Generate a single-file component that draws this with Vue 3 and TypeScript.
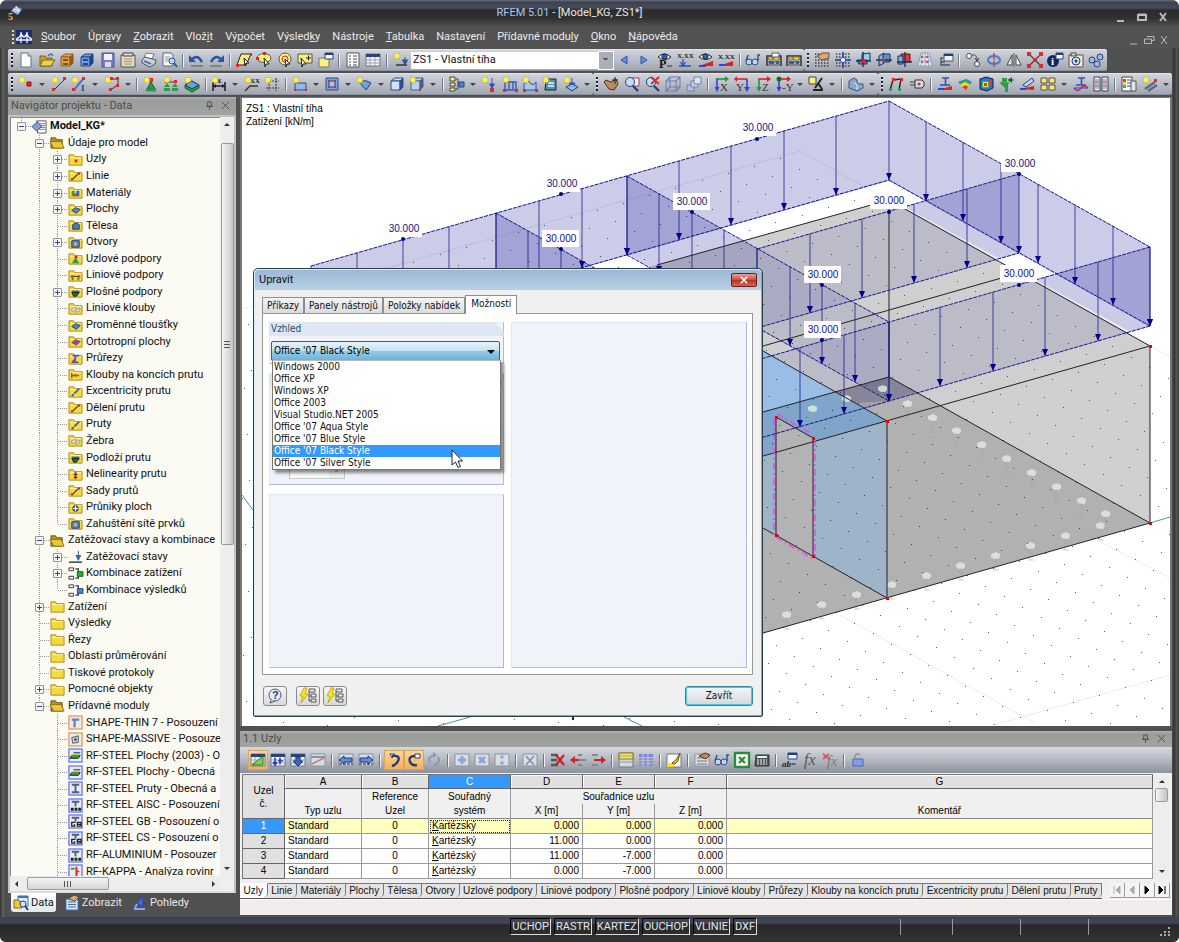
<script setup lang="ts">
import { ref } from 'vue'

type Item = string

const p = (d: string, fill = 'none', stroke = 'none', w = 1) =>
  `<path d="${d}" fill="${fill}" stroke="${stroke}" stroke-width="${w}"/>`
const dot = (x: number, y: number, r: number, fill: string, stroke = 'none') =>
  `<circle cx="${x}" cy="${y}" r="${r}" fill="${fill}" stroke="${stroke}"/>`
const label = (x: number, y: number, t: string, fill = '#333', size = 8, extra = 'font-weight="bold"') =>
  `<text x="${x}" y="${y}" font-size="${size}" fill="${fill}" font-family="Liberation Serif, serif" ${extra}>${t}</text>`

const star = p('M4 0V8M0 4H8M1 1L7 7M7 1L1 7', 'none', '#c9ae2a') + dot(4, 4, 2.5, '#fff04a')
const folder = p('M1 3H6L7 5H15V14H1Z', '#f5da3e', '#a98a1b') + p('M2 6H14', 'none', '#fff6a0')
const abacus = p('M1 14V4H15V14', 'none', '#333', 1.5) + p('M1 7H15M1 10H15M1 13H15', 'none', '#555') +
  p('M3 5H6V8H3ZM8 5H13V8H8Z', '#f7e16a', '#8a7a20') + p('M3 9H8V12H3ZM10 9H13V12H10Z', '#345fa8')
const grid = p('M1 2H16M1 5H16M1 8H16M1 11H16M1 14H16', 'none', '#444', 1.4).replace('/>', ' stroke-dasharray="1.500 1.500"/>')
const eye = p('M1 5Q7 -1 14 5Q8 10 1 5Z', '#fff', '#222') + dot(7.5, 4.5, 2.6, '#2f62b8', '#123')
const beam = p('M5 2H12M8.5 2V9M3 9H13', 'none', '#2b57a8', 1.6)
const card = p('M1 2H15V14H1Z', '#d9dde4', '#8d93a0')
const frameBox = (c: string) => p('M1 1H15V15H1Z', '#e9ebf2', c, 1.6)
const cube = (f: string, s: string) =>
  p('M2 5L6 2H14L11 5Z', f, s) + p('M2 5H11V14H2Z', f, s) + p('M11 5L14 2V11L11 14Z', s, s)
const supportNode = p('M8 6L12 13H4Z', '#2e9a48', '#1a5c2a') + p('M3 14H13', 'none', '#2e9a48', 3) + p('M6 2H10V6H6Z', '#e22')
const support2 = p('M2 6H14', 'none', '#333') + p('M4 7L7 11H1ZM12 7L15 11H9ZM1 12H7V15H1ZM9 12H15V15H9Z', '#2e9a48') + p('M2 4H5V7H2ZM11 4H14V7H11Z', '#e22')
const tableBase = p('M1 2H15V14H1Z', '#f4f6fa', '#6d7585') + p('M1 2H15V5H1Z', '#27457c') + p('M1 8H15M1 11H15M5 5V14M10 5V14', 'none', '#9aa3b3')
const arrows = (n: string, a: string, b: string) =>
  p('M3 3H13', 'none', a, 1.6) + p('M12 0L16 3L12 6Z', a) + p('M4 3V13', 'none', b, 1.6) + p('M1.500 11L4 16L6.500 11Z', b) + label(7, 15, n, '#333', 11, '')

const icons: Record<string, string> = {
  app: p('M3 6L8 1L14 4L10 10Z', '#a9bfe0', '#4a6797') + p('M8 1L11 7M5 4L12 6', 'none', '#e8f0ff') + label(0, 15, '5', '#f5c01c', 10),
  bridge: p('M0 1H16V15H0Z', '#1f2d6e') + p('M0 11H16M5 3V14M11 3V14M0 10Q5 8 5 4Q8 12 11 4Q11 8 16 10', 'none', '#f2f5ff', 1.3),
  new: p('M3 1H10L13 4V15H3Z', '#fff', '#6b7280') + p('M10 1V4H13', '#dde3ee', '#6b7280'),
  open: p('M1 4H6L7 6H13V14H1Z', '#c9a227', '#7c6418') + p('M4 8H16L12 14H1Z', '#f0cf55', '#7c6418') + p('M9 4Q12 0 14 4', 'none', '#3a6fc2', 1.4),
  boxo: cube('#e2a24a', '#8f5c1a') + p('M4 8H9M4 12H9', 'none', '#5c3a0c', 1.4),
  boxb: cube('#6f9de8', '#23448c') + p('M4 8H9M4 12H9', 'none', '#122c66', 1.4),
  save: p('M2 1H14V15H2Z', '#7b7fc9', '#4b4f94') + p('M4 2H12V8H4Z', '#f2f2fb') + p('M5 10H11V15H5Z', '#d8d9ea'),
  clip: p('M1 3H15V15H1Z', '#e8dcc0', '#555') + p('M3 1H13V4H3Z', '#ddd', '#444') + p('M4 7H12M4 9.500H12M4 12H12', 'none', '#a38f63'),
  print: p('M5 1L13 2L11 7L3 6Z', '#fff', '#777') + p('M1 8L4 5L15 8L14 12L9 15L1 11Z', '#cdd2da', '#555') + p('M3 9L10 12', 'none', '#46639c', 1.5),
  preview: p('M2 1H10L12 3V14H2Z', '#f4f6fa', '#666') + p('M4 5H9M4 7H9M4 9H8', 'none', '#999') + dot(11, 9, 3, '#b8d6f5', '#2d5b9e') + p('M13 11L16 15', 'none', '#2d5b9e', 2),
  undo: p('M3 8Q9 1 14 10', 'none', '#2c55a0', 2.6) + p('M1 3V10H8Z', '#2c55a0') + p('M3 14H15', 'none', '#555'),
  redo: p('M2 10Q7 1 13 8', 'none', '#2c55a0', 2.6) + p('M15 3V10H8Z', '#2c55a0') + p('M1 14H13', 'none', '#555'),
  para: p('M5 2H15L10 13H1Z', '#fdf07a', '#222') + p('M0 12H3V15H0ZM14 1H16V4H14Z', '#e22') + p('M8 6L13 11L10 11L9 14Z', '#fff', '#222'),
  ellp: `<ellipse cx="8" cy="6" rx="7" ry="4.500" fill="#fdf07a" stroke="#555"/>` + p('M0 5H3V8H0ZM7 0H10V3H7Z', '#e22') + p('M8 6L13 12L10 12L9 15Z', '#fff', '#222'),
  circ: dot(8, 7, 6, '#fdf07a', '#555') + dot(8, 7, 3, 'none', '#d22') + p('M8 7L13 12L10 12L9 15Z', '#fff', '#222'),
  yplus: p('M1 2H15V11H1Z', '#fdf07a', '#555') + p('M9 6H14M11.500 3.500V8.500', 'none', '#222') + p('M4 6L9 12L6 12L5 15Z', '#fff', '#222'),
  ynew: p('M1 6H11V15H1Z', '#fdf07a', '#777') + p('M7 1H15V7H7Z', '#fff', '#24407a') + p('M7 1H15V3H7Z', '#24407a'),
  list: p('M2 1H14V15H2Z', '#fff', '#555') + p('M4 4H6M8 4H12M4 7H6M8 7H12M4 10H6M8 10H12M4 13H6M8 13H12', 'none', '#444'),
  table: tableBase,
  sload: star + p('M3 13H14', 'none', '#333', 1.5) + p('M12 5V10M9.500 8L12 13L14.500 8Z', '#2c55a0', '#2c55a0'),
  left: p('M11 4V12L5 8Z', '#5d8be6', '#2f57b0'),
  right: p('M5 4V12L11 8Z', '#5d8be6', '#2f57b0'),
  eyep: eye + label(2, 16, 'P', '#111', 12) + p('M10 14H15', 'none', '#333'),
  xxd: label(0, 6, 'X.XX', '#222', 7) + p('M6 7V13M2 14H14M3.500 10L6 14L8.500 10', 'none', '#2b57a8', 1.3),
  eyer: eye + p('M1 14L15 9V14Z', '#d22') + p('M1 14H8', 'none', '#24f', 2),
  xxr: label(0, 7, 'X.XX', '#222', 7) + p('M1 14L15 9V14Z', '#d22') + p('M1 13H8', 'none', '#24f', 2),
  glasses: dot(4, 10, 3, '#c3d3ee', '#2b4b86') + dot(10, 10, 3, '#c3d3ee', '#2b4b86') + p('M1 9L3 3M13 9L13 3L15 3', 'none', '#2b4b86', 1.4),
  abac1: abacus + p('M6 1H13V5H6Z', '#fff', '#555'),
  abac: abacus,
  ghand: grid + p('M3 4L9 1L15 1L15 6L8 8Z', '#d9a87a', '#6d4a2a'),
  gcross: grid + p('M8 0V16M0 8H16', 'none', '#2340b8', 1.6) + dot(8, 8, 2.5, '#fff', '#2340b8'),
  gb1: p('M6 2L14 1V8L6 10Z', '#9cc7ef', '#234') + p('M1 8H11V12H3Z', '#4a86d0', '#234') + p('M7 0V15M0 9H15', 'none', '#14366b', 1.5) + p('M6 8H9V11H6Z', '#e22'),
  gb2: p('M3 4L8 1V11L3 14Z', '#8ab8ea', '#234') + p('M7 2H14V10H7Z', '#5a94d8', '#234') + p('M0 8H16', 'none', '#14366b', 1.5) + p('M6 7H9V10H6Z', '#e22'),
  gb3: p('M4 2H13V10H4Z', '#e33', '#611') + p('M1 4H6V12H1Z', '#7ab0e8', '#234') + p('M8 0V15M0 10H15', 'none', '#14366b', 1.4),
  gnet: p('M4 1H12L15 14H1Z', '#e9f1fb', '#8aa0c0') + p('M8 1V14M3 5H13M2 9H14M5.500 1L4 14M10.500 1L12 14', 'none', '#8aa0c0') + p('M4 4H6V6H4ZM9 4H11V6H9ZM9 9H11V11H9ZM4 9H6V11H4Z', '#e44'),
  gwin: p('M6 2H15V9H6Z', '#eef3fb', '#456') + p('M6 2H15V4H6Z', '#24407a') + p('M5 6H3V13H12M3 10H7', 'none', '#456', 1.3),
  copy: dot(4, 4, 2.5, '#fff', '#444') + dot(12, 12, 2.5, '#fff', '#444') + p('M7 3Q12 2 12 8', 'none', '#555') + p('M10 6L12 9L14 6', 'none', '#333'),
  rot: `<ellipse cx="8" cy="8" rx="6" ry="4" fill="none" stroke="#4f78c8" stroke-width="2"/>` + p('M8 1V15', 'none', '#d33', 1.4).replace('/>', ' stroke-dasharray="3 1"/>'),
  mirror: p('M6 3V13L1 13Z', '#eee', '#444') + p('M10 3V13L15 13Z', '#fff', '#444') + p('M8 1V15', 'none', '#555'),
  xcross: p('M2 2L14 14M14 2L2 14', 'none', '#444', 1.4) + p('M0 0H4V4H0ZM12 0H16V4H12ZM0 12H4V16H0ZM12 12H16V16H12ZM6 6H10V10H6Z', '#e02a2a'),
  info: dot(6, 9, 6, '#15276b') + label(4, 13, 'i', '#fff', 11) + p('M9 1H16V7H9Z', '#fff', '#24407a') + p('M9 1H16V3H9Z', '#24407a'),
  cam: p('M1 3H15V15H1Z', '#f3e6cf', '#555') + p('M3 1H8V4H3Z', '#ddd', '#444') + dot(8, 9, 4, '#cfe0f5', '#24407a') + dot(8, 9, 1.5, '#24407a'),
  dots3: dot(4, 8, 3, '#9db9e6', '#24407a') + dot(12, 5, 3, '#9db9e6', '#24407a') + dot(9, 12, 3, '#9db9e6', '#24407a'),
  node: star + p('M9 6H13V10H9Z', '#e02a2a', '#911'),
  line: star + p('M3 14L14 3', 'none', '#333') + p('M1 12H4V15H1ZM12 1H15V4H12Z', '#e02a2a'),
  linei: star + p('M3 14L12 3', 'none', '#4a78c8', 2) + label(10, 15, 'I', '#24407a', 9) + p('M1 12H4V15H1ZM11 1H14V4H11Z', '#e02a2a'),
  poly: star + p('M7 3H14V9L6 14', 'none', '#333') + p('M6 1H9V4H6ZM12 1H15V4H12ZM12 8H15V11H12ZM5 12H8V15H5Z', '#e02a2a'),
  sup1: supportNode + star,
  sup2: support2 + star,
  sup3: p('M1 9L8 5L15 9L8 13Z', '#5ba7ea', '#225') + p('M1 9V12L8 16L15 12V9L8 13Z', '#2e9a48', '#1a5c2a') + star,
  dim: p('M2 6V15M14 6V15M2 10H14', 'none', '#222', 1.6) + p('M2 10L5 8V12ZM14 10L11 8V12Z', '#222') + label(6, 7, 'x', '#222', 9) + star,
  dimxx: label(6, 7, 'XX', '#222', 7) + p('M1 15L6 10H14', 'none', '#333', 1.4) + star,
  gridn: p('M5 2V15M12 2V15M2 5H15M2 12H15', 'none', '#444', 1.2).replace('/>', ' stroke-dasharray="2 1"/>') + star,
  surf: p('M3 7H14V14H3Z', '#8cb8ec', '#2d4f86') + p('M2 13H4V15H2ZM13 13H15V15H13Z', '#e02a2a') + star,
  openg: p('M2 2H14V14H2Z', '#79a5dc', '#2d4f86') + p('M5 5H11V11H5Z', '#a9c6ee', '#24407a') + p('M4 4H6V6H4ZM10 4H12V6H10ZM4 10H6V12H4ZM10 10H12V12H10Z', '#e02a2a'),
  surfc: p('M3 6Q9 3 15 7L10 14Z', '#6aa3e3', '#24407a') + star,
  solid: cube('#cfe0f7', '#2d4f86'),
  boxn: cube('#b9d3f2', '#4a5f86') + p('M10 13H12V15H10Z', '#e02a2a') + star,
  tree: p('M1 1H6V5H1ZM1 7H6V10H1ZM1 12H6V15H1Z', '#fdf07a', '#444') + p('M7 3H9V13H7M9 8H11', 'none', '#444') + p('M10 6H15V11H10Z', '#4a86d0', '#24407a'),
  ld1: p('M11 2V9M8.500 8L11 12L13.500 8Z', '#2c55c0', '#2c55c0') + p('M9 12H13V16H9Z', '#e02a2a') + star,
  ld2: p('M2 14H15M3 13V6H14V13M7 6V13M11 6V13', 'none', '#2c55c0', 1.3) + p('M1 13H4V16H1ZM13 13H16V16H13Z', '#e02a2a') + star,
  ld3: p('M2 14V8Q6 2 9 8Q12 10 14 6V14Z', '#a8c5ee', '#2c55c0') + p('M1 13H4V16H1ZM13 13H16V16H13Z', '#e02a2a') + star,
  ld4: p('M4 3H14V14H3Z', '#4d8fb8', '#223') + p('M6 7H12M6 10H12', 'none', '#dff', 1.3) + star,
  ld5: p('M9 2V8M6 7L9 11L12 7Z', '#2c55c0', '#2c55c0') + p('M3 11L9 8L15 11L9 15Z', '#8cb8ec', '#24407a') + star,
  pan: p('M3 4L8 6L13 3L15 8L11 14L6 13L1 6Z', '#b98d63', '#4a3420') + p('M12 1V8M9 4H15', 'none', '#222'),
  zoomw: p('M8 2H15V10H8Z', '#e8eefb', '#c33') + dot(6, 6, 4.5, '#c8dcf8', '#24407a') + p('M9 10L14 15', 'none', '#24407a', 2.4),
  zoomx: dot(6, 6, 4.5, '#c8dcf8', '#24407a') + p('M9 10L14 15', 'none', '#24407a', 2.4) + p('M6 1L14 8M14 1L6 8', 'none', '#e02a2a', 2),
  wire: p('M1 5H11V15H1ZM5 1H15V11H5ZM1 5L5 1M11 5L15 1M1 15L5 11M11 15L15 11', 'none', '#6d80b4', 1.1),
  wire2: p('M1 9H8V15H1Z', '#b9c4dc', '#6d80b4') + p('M5 5H12V11H5Z', '#c9d3e8', '#6d80b4') + p('M8 1H15V8H8Z', '#dde4f2', '#6d80b4'),
  vx: arrows('X', '#1a9a3a', '#2b46e0'),
  vy: p('M2 3H13', 'none', '#d22', 1.6) + p('M3 0L0 3L3 6Z', '#d22') + p('M13 3V13', 'none', '#2b46e0', 1.6) + p('M10 11L13 16L16 11Z', '#2b46e0') + label(2, 15, 'Y', '#333', 11, ''),
  vz: arrows('Z', '#d22', '#1a9a3a'),
  vmy: arrows('-Y', '#d22', '#2b46e0') + dot(4, 3, 2.5, '#176b2a'),
  vis: p('M1 1H8V8H1Z', '#fdf07a', '#444') + p('M14 2L7 12M10 7L14 13M5 14H15', 'none', '#222', 2),
  iso: p('M1 5L6 2L9 4V8L15 8V12L9 15L1 12Z', '#8aa9cf', '#3c5373') + p('M6 7L9 8V14', 'none', '#dfeaf8'),
  frame: p('M2 14L5 4L13 3L11 14', 'none', '#222', 1.4) + p('M4 2H7V5H4ZM12 2H15V5H12Z', '#e02a2a') + p('M1 12H4V15H1ZM10 12H13V15H10Z', '#2aa043'),
  chip: p('M6 4H13L15 6V10L13 12H6Z', '#d5d8de', '#333') + p('M1 6H6M1 9H6', 'none', '#444') + dot(10, 8, 1.5, '#c33'),
  rbeam: beam + p('M1 14L15 10V14Z', '#d22') + p('M1 13H7', 'none', '#24f', 2),
  rain1: p('M1 6L9 3L15 6L9 13Z', '#2b6fe0') + p('M2 7L9 4L14 7L9 13Z', '#25c24a') + p('M3 9L8 6L13 9L9 13Z', '#f6e01c') + p('M5 11L9 9L11 11L9 14Z', '#e33'),
  rain2: p('M2 3L8 1L15 3V12L9 15L2 13Z', '#2b6fe0', '#123') + p('M4 5H11V12H4Z', '#25c24a') + p('M5 6H10V11H5Z', '#f6e01c') + p('M6 7H9V10H6Z', '#e33') + p('M12 4H14V9H12Z', '#e33'),
  gsup: p('M3 2H8V6H3ZM6 7H9V16H6Z', '#2aa043') + p('M2 7H9L6 11ZM9 4H15', '#2aa043', '#2aa043', 1.6) + p('M9 4L13 1V7Z', '#175c2a'),
  sect: p('M4 9L13 2L15 5L7 11Z', '#c8d8f0', '#24407a') + p('M1 13L15 10V14Z', '#d22') + p('M1 13H7', 'none', '#24f', 2),
  four: p('M1 2H7V7H1ZM9 2H15V7H9ZM1 9H7V14H1ZM9 9H15V14H9Z', '#fbe668', '#555'),
  bm: beam + p('M1 12Q5 17 8 12Q11 8 15 12', 'none', '#d22', 1.4) + p('M1 12H15', 'none', '#24f'),
  quad: p('M1 1H7V15H1ZM9 1H15V15H9Z', '#eef', '#345') + p('M2 4H6M2 8H6M2 12H6M10 4H14M10 8H14M10 12H14', 'none', '#c66', 1.2) + p('M2 6H6M10 6H14M2 10H6M10 10H14', 'none', '#2c55a0'),
  rlist: p('M1 1H11V15H1Z', '#fff', '#444') + p('M2 3H5V6H2Z', '#e33') + p('M2 6H5V9H2Z', '#f6e01c') + p('M2 9H5V12H2Z', '#25c24a') + p('M6 4H10M6 7H10M6 10H10', 'none', '#444') + p('M10 5H15V15H10Z', '#dde3ee', '#555'),
  wand: p('M3 13L13 6M6 15L15 9', 'none', '#5c6a80', 2.4) + p('M12 3H15V6H12Z', '#e02a2a') + star,
  tgreen: tableBase + p('M2 13L13 4V13Z', '#7bd35a', '#2c7a1c'),
  tplus: tableBase + p('M5 6V12M3 10L5 13L7 10M10 6V12M8 9H13', 'none', '#2340b8', 1.6),
  tdown: tableBase + p('M6 5H10V9H13L8 14L3 9H6Z', '#3a66d0', '#1b3478'),
  tdiag: card + p('M1 5H15', 'none', '#8a93a8', 2) + p('M2 12L14 6', 'none', '#c77', 1.5),
  tleft: card + p('M1 12H15', 'none', '#777', 2.4).replace('/>', ' stroke-dasharray="3 1"/>') + p('M1 8L6 4V6H14V10H6V12Z', '#5d8be6', '#1b3478'),
  tright: card + p('M1 12H15', 'none', '#777', 2.4).replace('/>', ' stroke-dasharray="3 1"/>') + p('M15 8L10 4V6H2V10H10V12Z', '#5d8be6', '#1b3478'),
  curlr: p('M4 2L9 2L6 6Z', '#fff', '#24407a') + p('M6 4Q15 3 12 9Q10 13 6 14', 'none', '#24407a', 2.4),
  curll: p('M9 2H14V6H9Z', '#fff', '#24407a') + p('M9 4Q2 4 4 10Q6 14 11 13', 'none', '#24407a', 2.4),
  sync: p('M4 11Q1 5 8 3M12 5Q15 11 8 13', 'none', '#8797b6', 2) + p('M7 0L11 3L7 6Z', '#8797b6'),
  gplus: card + p('M8 4V12M4 8H12', 'none', '#8ea4dc', 3),
  gx: card + p('M5 5L11 11M11 5L5 11', 'none', '#8ea4dc', 3),
  gdiv: card + dot(8, 5, 1.8, '#8ea4dc') + dot(8, 11, 1.8, '#8ea4dc'),
  gxx: card + p('M4 4L12 13M12 4L4 13', 'none', '#7d90bd', 1.6),
  rowx: p('M1 3H8M1 8H7M1 13H8', 'none', '#555', 2.4) + p('M6 3L14 13M14 3L6 13', 'none', '#c8202a', 2.2),
  rowl: p('M8 3H12M9 8H16M8 13H12', 'none', '#888', 2.2) + p('M0 8L5 4V7H9V9H5V12Z', '#d8202a'),
  rowr: p('M2 3H8M2 13H8', 'none', '#888', 2.2) + p('M16 8L11 4V7H4V9H11V12Z', '#d8202a'),
  tyel: p('M1 1H15V15H1Z', '#d5d8dc', '#777') + p('M1 1H15V7H1Z', '#f8e860', '#8a7a20') + p('M1 4H15M1 10H15', 'none', '#999'),
  tblu: p('M1 2H15V5H1Z', '#7d86d8') + p('M1 7H15M1 10H15M1 13H15', 'none', '#7d86d8', 1.6) + p('M5 2V14M10 2V14', 'none', '#c8ccd8'),
  note: p('M1 2H15V15H1Z', '#fff', '#777') + p('M1 11H8V15H1Z', '#f6e01c') + p('M14 1L10 8L6 11L9 12L12 9Z', '#e9c81c', '#6d5a10'),
  prop: card + p('M3 6H13M3 9H13M3 12H13', 'none', '#777') + p('M5 4L11 1L16 3L12 7Z', '#c08a5a', '#5c3a20'),
  xls: p('M1 1H15V15H1Z', '#fff', '#2c8a3a', 2.4) + p('M5 5L11 11M11 5L5 11', 'none', '#2c8a3a', 2.4),
  calc: p('M2 3H15V14H1Z', '#555', '#333') + p('M3 4H13V6H3Z', '#cfe') + p('M3 8H13M3 10H13M3 12H13', 'none', '#eee', 1.2).replace('/>', ' stroke-dasharray="2 1"/>'),
  ab: p('M6 1H15V7H6Z', '#eef', '#24407a') + p('M6 1H15V3H6Z', '#24407a') + label(0, 15, 'ab=', '#222', 9, 'font-style="italic" font-weight="bold"'),
  fx: label(2, 13, 'fx', '#555', 16, 'font-style="italic"'),
  fxx: label(5, 14, 'fx', '#777', 14, 'font-style="italic"') + p('M1 2L7 7M7 2L1 7', 'none', '#d55', 1.8),
  lock: p('M3 7H13V14H3Z', '#7fa0e6', '#4a68ad') + p('M5 7V4Q7 0 10 3', 'none', '#8a94a8', 1.6),
  model: p('M5 2H15V15H6Z', '#fff', '#555') + p('M8 5H14M8 7H14M8 9H14M8 11H14', 'none', '#777') + p('M0 8L6 3L10 8L5 13Z', '#7fa3d8', '#2d4f86'),
  fopen: p('M1 3H6L7 5H13V14H1Z', '#b8921c', '#6d5510') + p('M0 7H12L15 14H4Z', '#edc93a', '#8a7018'),
  folder,
  fnode: folder + p('M7 8H10V11H7Z', '#e02a2a'),
  fline: folder + p('M4 13L12 5', 'none', '#333', 1.3) + p('M3 11H5V13H3ZM11 5H13V7H11Z', '#d22'),
  fbar: folder + p('M4 13L12 5', 'none', '#4a5f86', 1.8) + p('M5 9L9 13', 'none', '#eee'),
  fmat: folder + p('M4 6H7V12H4Z', '#2aa043') + p('M6 9H10V12H6Z', '#d33') + p('M9 6H12V12H9Z', '#36c'),
  fsurf: folder + p('M4 9L8 6L13 8L9 12Z', '#4a86d0', '#24407a'),
  fcube: folder + p('M5 7L9 5L12 7V12H5Z', '#4a7ac0', '#24407a'),
  fopng: folder + p('M4 6H12V13H4Z', '#5a86c0', '#24407a') + p('M7 8H9V11H7Z', '#f5da3e'),
  fsup: folder + p('M8 7L12 13H4Z', '#2aa043') + p('M7 5H10V8H7Z', '#d22'),
  fsup2: folder + p('M4 9H12', 'none', '#333') + p('M3 8H6V10H3ZM10 8H13V10H10Z', '#d22') + p('M4 10H6V13H4ZM10 10H12V13H10Z', '#2aa043'),
  fsup3: folder + p('M4 7H12V9H4Z', '#36c') + p('M4 9H12L9 13H6Z', '#1c6b3a', '#123'),
  fhin: folder + p('M4 8L9 7L8 10L4 11ZM9 9L13 8L12 11L8 12Z', '#f4f4f4', '#999'),
  fbeam: folder + p('M5 5H12M8 6L7 12M4 12H11', 'none', '#35c', 1.8) + p('M4 12L8 8', 'none', '#d33', 1.4),
  fort: folder + p('M4 9L8 6L13 8L9 12Z', '#4a5fd0', '#d33'),
  fend: folder + p('M4 6V12M4 9H12', 'none', '#8a6a10', 1.6) + dot(8, 9, 1.4, '#d33'),
  fnon: folder + p('M8 5V13', 'none', '#d22', 2) + p('M6 8H10M6 11H10', 'none', '#333'),
  fx2: folder + dot(8, 9, 3, '#4a86d0', '#123') + p('M8 6V12M5 9H11', 'none', '#fff'),
  ls: p('M1 14H15', 'none', '#333', 1.5) + p('M11 2V8M8.500 7L11 12L13.500 7Z', '#4a78c8', '#2c55a0'),
  kz: p('M1 2H6V5H1ZM1 11H6V14H1Z', '#fff', '#333') + p('M8 3H11V7M8 13H11V10', 'none', '#333', 1.3) + p('M10 6H16V11H10Z', '#1fb53c', '#175c2a'),
  kv: p('M1 2H6V5H1ZM1 11H6V14H1Z', '#fff', '#333') + p('M8 3H11V7M8 13H11V10', 'none', '#333', 1.3) + p('M10 6H16V11H10Z', '#4a86d0', '#24407a'),
  m1: frameBox('#e8a66a') + p('M4 5H12M7 5V13', 'none', '#6b82a8', 2.4),
  m2: frameBox('#e8a66a') + p('M4 6L11 4V11L5 12Z', '#ccc', '#555') + dot(8, 8, 1.4, '#444'),
  m3: frameBox('#7c86f0') + p('M4 8H13L11 11H2Z', '#25a24a', '#123') + p('M5 6H13L12 8H4Z', '#e8c81c') + p('M6 5H13', 'none', '#36c', 1.6),
  m4: frameBox('#7c86f0') + p('M4 4H12M8 4V12M4 12H12', 'none', '#4a5f86', 2),
  m5: frameBox('#7c86f0') + p('M4 4H12M8 4V9', 'none', '#4a5f86', 2) + p('M3 12H14', 'none', '#222', 3).replace('/>', ' stroke-dasharray="3 1"/>'),
  m6: frameBox('#7c86f0') + p('M4 4H12M8 4V8', 'none', '#4a5f86', 2) + p('M8 9H4V13H7V11M10 9H14V13H10ZM10 11H14', 'none', '#222', 1.4),
  m7: frameBox('#7c86f0') + p('M3 5H7', 'none', '#2a9a3a', 2) + p('M9 3V14', 'none', '#d22', 2) + p('M9 8H12', 'none', '#d22', 1.6),
  help: dot(8, 7, 6, '#e4ebf6', '#4a5878') + p('M4 12L3 15L8 13', '#e4ebf6', '#4a5878') + `<text x="5" y="11" font-size="11" font-weight="bold" fill="#24407a" font-family="Liberation Sans, sans-serif">?</text>`,
  flash: p('M4 0L0 8H3L1 15L8 6H5L7 0Z', '#f6ea1c', '#c0ac18') + p('M9 1H15V4H9ZM11 6H16V9H11ZM11 11H16V14H11Z', '#eee', '#555') + p('M9 4V13H11M9 8H11', 'none', '#555'),
  tdata: p('M5 1H15V11H5Z', '#e8f0fc', '#3a6fc2') + p('M5 1H15V3H5Z', '#3a6fc2') + p('M1 5H6L7 7H9V13H1Z', '#f0c832', '#8a6a10') + dot(10, 9, 3, '#cfe2fa', '#24407a') + p('M12 11L15 15', 'none', '#24407a', 2),
  tview: p('M2 4H14V15H2Z', '#dce8fa', '#3a6fc2') + p('M4 7H12M4 9.500H12M4 12H12', 'none', '#3a6fc2') + p('M4 4L10 0L15 2L11 6Z', '#d9a87a', '#6d4a2a'),
  tpoh: p('M11 1L11 11L5 9Z', '#4a68e0', '#2b46b0') + p('M2 14H13M5 9L3 13', 'none', '#8aa4f2', 2),
}

const toolbarA: Item[] = ['|g', 'new', 'open', 'boxo', 'boxb', 'save', 'clip', 'print', 'preview', '|', 'undo', 'redo', '|', 'para', 'ellp', 'circ', 'yplus', 'ynew', '|', 'list', 'table', '|', 'sload', '|c', 'left', 'right', 'eyep', 'xxd', 'eyer', 'xxr', '|', 'glasses', 'abac1', 'abac']
const toolbarB: Item[] = ['|g', 'ghand', 'gcross', 'gb1', 'gb2', 'gb3', 'gnet', 'gwin', '|', 'copy', 'rot', 'mirror', 'xcross', 'info', 'cam', 'dots3']
const toolbarC: Item[] = ['|g', 'node', '|d', 'line', 'linei', '|d', 'poly', '|d', '|', 'sup1', 'sup2', 'sup3', '|', 'dim', '|d', 'dimxx', 'gridn', '|', 'surf', '|d', 'openg', '|d', 'surfc', '|d', 'solid', 'boxn', '|d', '|', 'tree', '|d', 'ld1', 'ld2', 'ld3', 'ld4', 'ld5', '|d']
const toolbarD: Item[] = ['|g', 'pan', 'zoomw', 'zoomx', 'wire', 'wire2', '|', 'vx', 'vy', 'vz', 'vmy', '|d', 'vis', '|d', '|', 'iso', '|d']
const toolbarE: Item[] = ['|g', 'frame', 'chip', '|', 'rbeam', 'rain1', 'rain2', 'gsup', 'sect', 'four', '|d', 'bm', 'quad', '|', 'rlist', 'wand', '|d']
const toolRows = [
  [{ cls: 'bar-a', items: toolbarA }, { cls: 'bar-b', items: toolbarB }],
  [{ cls: 'bar-c', items: toolbarC }, { cls: 'bar-d', items: toolbarD }, { cls: 'bar-e', items: toolbarE }],
]
const tableTools: Item[] = ['*tgreen', 'tplus', 'tdown', 'tdiag', '|', 'tleft', 'tright', '|', '*curlr', '*curll', 'sync', '|', 'gplus', 'gx', 'gdiv', '|', 'gxx', '|', 'rowx', 'rowl', 'rowr', '|', 'tyel', 'tblu', '|', 'note', '|', 'prop', 'glasses', 'xls', 'calc', '|', 'ab', 'fx', 'fxx', '|', 'lock']

const menus = ['_Soubor', 'Úpr_avy', '_Zobrazit', 'Vlož_it', 'Vý_počet', 'Výsled_ky', 'Nástro_je', '_Tabulka', 'Nasta_vení', 'Přídavné modu_ly', '_Okno', '_Nápověda'].map((m) => {
  const i = m.indexOf('_')
  return { pre: m.slice(0, i), key: m[i + 1], post: m.slice(i + 2) }
})

interface Node { level: number; icon: string; text: string; box?: '+' | '-'; last?: boolean; rail?: boolean }
const n2 = (text: string, icon: string, box?: '+', last = false): Node => ({ level: 2, icon, text, box, last, rail: true })
const mod = (text: string, icon: string): Node => ({ level: 2, icon, text })
const nodes: Node[] = [
  { level: 0, icon: 'model', text: 'Model_KG*', box: '-', last: true },
  { level: 1, icon: 'fopen', text: 'Údaje pro model', box: '-' },
  n2('Uzly', 'fnode', '+'), n2('Linie', 'fline', '+'), n2('Materiály', 'fmat', '+'), n2('Plochy', 'fsurf', '+'),
  n2('Tělesa', 'fcube'), n2('Otvory', 'fopng', '+'), n2('Uzlové podpory', 'fsup'), n2('Liniové podpory', 'fsup2'),
  n2('Plošné podpory', 'fsup3', '+'), n2('Liniové klouby', 'fhin'), n2('Proměnné tloušťky', 'fsurf'),
  n2('Ortotropní plochy', 'fort'), n2('Průřezy', 'fbeam'), n2('Klouby na koncích prutu', 'fend'),
  n2('Excentricity prutu', 'fbar'), n2('Dělení prutu', 'fline'), n2('Pruty', 'fbar'), n2('Žebra', 'fhin'),
  n2('Podloží prutu', 'fsup3'), n2('Nelinearity prutu', 'fnon'), n2('Sady prutů', 'fline'), n2('Průniky ploch', 'fx2'),
  n2('Zahuštění sítě prvků', 'fopng', undefined, true),
  { level: 1, icon: 'fopen', text: 'Zatěžovací stavy a kombinace', box: '-' },
  n2('Zatěžovací stavy', 'ls', '+'), n2('Kombinace zatížení', 'kz', '+'), n2('Kombinace výsledků', 'kv', undefined, true),
  { level: 1, icon: 'folder', text: 'Zatížení', box: '+' },
  { level: 1, icon: 'folder', text: 'Výsledky' },
  { level: 1, icon: 'folder', text: 'Řezy' },
  { level: 1, icon: 'folder', text: 'Oblasti průměrování' },
  { level: 1, icon: 'folder', text: 'Tiskové protokoly' },
  { level: 1, icon: 'folder', text: 'Pomocné objekty', box: '+' },
  { level: 1, icon: 'fopen', text: 'Přídavné moduly', box: '-', last: true },
  mod('SHAPE-THIN 7 - Posouzení', 'm1'), mod('SHAPE-MASSIVE - Posouze', 'm2'),
  mod('RF-STEEL Plochy (2003) - O', 'm3'), mod('RF-STEEL Plochy - Obecná', 'm3'),
  mod('RF-STEEL Pruty - Obecná a', 'm4'), mod('RF-STEEL AISC - Posouzení', 'm5'),
  mod('RF-STEEL GB - Posouzení o', 'm6'), mod('RF-STEEL CS - Posouzení o', 'm6'),
  mod('RF-ALUMINIUM - Posouzer', 'm5'), mod('RF-KAPPA - Analýza rovinr', 'm7'),
]

const navTabs = [{ t: 'Data', i: 'tdata' }, { t: 'Zobrazit', i: 'tview' }, { t: 'Pohledy', i: 'tpoh' }]
const styles = ['Windows 2000', 'Office XP', 'Windows XP', 'Office 2003', 'Visual Studio.NET 2005', "Office '07 Aqua Style", "Office '07 Blue Style", "Office '07 Black Style", "Office '07 Silver Style"]
const chosen = ref("Office '07 Black Style")
const dialogTabs = ['Příkazy', 'Panely nástrojů', 'Položky nabídek', 'Možnosti']
const letters = ['A', 'B', 'C', 'D', 'E', 'F', 'G']
const rows = [
  ['0.000', '0.000', '0.000'],
  ['11.000', '0.000', '0.000'],
  ['11.000', '-7.000', '0.000'],
  ['0.000', '-7.000', '0.000'],
]
const sheets = ['Uzly', 'Linie', 'Materiály', 'Plochy', 'Tělesa', 'Otvory', 'Uzlové podpory', 'Liniové podpory', 'Plošné podpory', 'Liniové klouby', 'Průřezy', 'Klouby na koncích prutu', 'Excentricity prutu', 'Dělení prutu', 'Pruty']
const modes = ['UCHOP', 'RASTR', 'KARTEZ', 'OUCHOP', 'VLINIE', 'DXF']

/* Load planes: top edge from (x1,y1) to (x2,y2), all of the same height. */
const H = 79
interface Plane { x1: number; y1: number; x2: number; y2: number; at: number[] }
const planes: Plane[] = [
  { x1: 311, y1: 266, x2: 889, y2: 101, at: [311, 357, 403, 449, 496, 539, 582, 627, 679, 731, 784, 836, 889] },
  { x1: 889, y1: 101, x2: 1150, y2: 247, at: [926, 963, 1001, 1038, 1075, 1113, 1150] },
  { x1: 496, y1: 213, x2: 757, y2: 359, at: [496, 528, 561, 594] },
  { x1: 627, y1: 176, x2: 889, y2: 322, at: [627, 659, 692, 724, 757, 790, 822, 855, 889] },
  { x1: 757, y1: 249, x2: 1019, y2: 174, at: [757, 810, 862, 914, 967, 1019] },
  { x1: 757, y1: 360, x2: 1150, y2: 247, at: [800, 844, 889, 940, 993, 1045, 1098, 1150] },
]
const poly = (q: Plane) => `${q.x1},${q.y1} ${q.x2},${q.y2} ${q.x2},${q.y2 + H} ${q.x1},${q.y1 + H}`
const arrowList = planes.flatMap((q) => q.at.map((x) => ({ x, y: Math.round(q.y1 + ((q.y2 - q.y1) * (x - q.x1)) / (q.x2 - q.x1)) })))

const gridDots: string = (() => {
  let d = ''
  for (let i = -60; i < 60; i++) {
    for (let j = -50; j < 50; j++) {
      const x = 872.7 + i * 18.45 - j * 26.2
      const y = 633.3 + i * 10.45 + j * 7.4
      if (x < 241 || x > 1171 || y > 726) continue
      if (y < 151 + (800 - x) * 0.284 || y < 151 + (x - 800) * 0.557) continue
      d += `M${Math.round(x)} ${Math.round(y)}h1v1h-1z`
    }
  }
  return d
})()

const springs = [[883, 388], [847, 398], [813, 408], [908, 403], [933, 417], [957, 430], [982, 444], [1007, 458], [1032, 472], [1057, 486], [1082, 500], [1106, 513], [1101, 525], [1066, 535], [1031, 545], [996, 555], [961, 565], [927, 575], [892, 584], [857, 594], [822, 604], [787, 614]]
const corners = [[1150, 346], [1150, 523], [887, 421], [887, 598], [776, 417], [813, 438], [813, 556], [776, 535]]
const tags = [[404, 229], [562, 184], [758, 128], [1020, 164], [561, 239], [692, 202], [889, 201], [823, 275], [823, 330], [1019, 274]]
const pins = [[403, 239], [561, 194], [561, 249], [692, 212], [757, 139], [889, 212], [1019, 174], [822, 285], [822, 340], [1019, 285]]
</script>

<template>
  <div class="app">
    <header class="titlebar">
      <svg class="ico" viewBox="0 0 16 16" v-html="icons.app" />
      <h1><span>RFEM 5.01</span> - [Model_KG, ZS1*]</h1>
      <div class="wctl">
        <button aria-label="Minimalizovat"><svg viewBox="0 0 12 12"><path d="M2 10H9" /></svg></button>
        <button aria-label="Maximalizovat"><svg viewBox="0 0 12 12"><path d="M2 3.500H10M2 4H10V9H2Z" /></svg></button>
        <button aria-label="Zavřít okno"><svg viewBox="0 0 12 12"><path d="M3 2L9 10M9 2L3 10" /></svg></button>
      </div>
    </header>

    <nav class="menubar">
      <i class="grip" />
      <svg class="ico" viewBox="0 0 16 16" v-html="icons.bridge" />
      <button v-for="m in menus" :key="m.pre + m.key">{{ m.pre }}<u>{{ m.key }}</u>{{ m.post }}</button>
      <div class="wctl mdi">
        <button aria-label="Minimalizovat model"><svg viewBox="0 0 12 12"><path d="M2 10H9" /></svg></button>
        <button aria-label="Obnovit model"><svg viewBox="0 0 12 12"><path d="M4 2.500H11V6.500H9M1.500 5H8.500V9.500H1.500Z" /></svg></button>
        <button aria-label="Zavřít model"><svg viewBox="0 0 12 12"><path d="M3 2L9 10M9 2L3 10" /></svg></button>
      </div>
    </nav>

    <div v-for="(row, r) in toolRows" :key="r" class="toolrow">
      <div v-for="bar in row" :key="bar.cls" class="bar" :class="bar.cls" role="toolbar">
        <template v-for="(it, k) in bar.items" :key="k">
          <span v-if="it === '|g'" class="t-grip"><i class="grip dark" /></span>
          <span v-else-if="it === '|'" class="t-sep"><i /></span>
          <button v-else-if="it === '|d'" class="t-drop" aria-label="Další možnosti" />
          <span v-else-if="it === '|c'" class="t-combo">
            <select aria-label="Zatěžovací stav"><option>ZS1 - Vlastní tíha</option></select>
          </span>
          <button v-else class="t-btn" :aria-label="it"><svg class="ico" viewBox="0 0 16 16" v-html="icons[it]" /></button>
        </template>
      </div>
    </div>

    <main class="work">
      <aside class="navigator">
        <div class="phead">
          <span>Navigátor projektu - Data</span>
          <button aria-label="Připnout"><svg viewBox="0 0 10 10"><path d="M3 1H7V6H3ZM1 6H9M5 6V10" /></svg></button>
          <button aria-label="Zavřít navigátor"><svg viewBox="0 0 10 10"><path d="M1 1L9 9M9 1L1 9" /></svg></button>
        </div>
        <div class="treebox">
          <div class="treeview">
            <ul>
              <li v-for="(n, i) in nodes" :key="i">
                <span v-for="l in n.level" :key="l" class="cell" :class="{ rail: l === 2 && n.rail }" />
                <span class="cell joint" :class="{ last: n.last }"><b v-if="n.box" class="box" :class="{ plus: n.box === '+' }" /></span>
                <svg class="ico" viewBox="0 0 16 16" v-html="icons[n.icon]" />
                <span class="txt" :class="{ root: n.level === 0 }">{{ n.text }}</span>
              </li>
            </ul>
          </div>
          <div class="vscroll"><i class="up" /><b class="thumb" /><i class="down" /></div>
          <div class="hscroll"><i class="lt" /><b class="thumb" /><i class="rt" /></div>
        </div>
        <div class="navtabs">
          <button v-for="(t, i) in navTabs" :key="t.t" :class="{ on: i === 0 }"><svg class="ico" viewBox="0 0 16 16" v-html="icons[t.i]" />{{ t.t }}</button>
        </div>
      </aside>

      <div class="right">
        <section class="view">
          <svg class="scene" viewBox="242 98 928 628" preserveAspectRatio="xMinYMin slice">
            <g fill="none" stroke="#ececec">
              <path d="M800 151L242 309M800 151L1170 357M840 615L1035 723M997 724L1170 675M1087 535L1170 578" />
              <path d="M1150 523L1170 517M438 726L470 717M624 717L642 726M242 495L253 510" stroke="#4f9292" />
            </g>
            <polygon points="889,200 1150,346 1150,523 763,633 560,640 560,292" fill="#000" fill-opacity=".19" />
            <g fill="#00008c" fill-opacity=".09">
              <polygon :points="poly(planes[4])" />
              <polygon :points="poly(planes[5])" />
              <polygon points="757,249 889,322 889,400 757,328" />
            </g>
            <polygon points="889,377 1150,523 763,633 560,630 560,470" fill="#000" fill-opacity=".14" />
            <polygon points="763,351 887,421 887,598 763,528" fill="#9eb4c9" />
            <polygon points="763,351 887,421 763,456" fill="#99bee5" />
            <polygon points="763,412 835,392 887,421 763,456" fill="#80a5cb" />
            <polygon points="835,392 889,377 917,392 887,401 855,403" fill="#20204a" fill-opacity=".2" />
            <polygon points="776,417 813,438 813,556 776,535" fill="#b3b3b3" />
            <g class="springs">
              <path v-for="s in springs" :key="s[0] + '-' + s[1]" :d="`M${s[0] - 5} ${s[1] - 1}l5 -2 4 2v3l-2 2h-4l-3 -2z`" />
              <path v-for="s in springs" :key="'z' + s[0] + '-' + s[1]" class="coil" :d="`M${s[0]} ${s[1] + 3}l-2 4 4 2 -4 3 2 3M${s[0] - 3} ${s[1] + 15}h6`" />
            </g>
            <path :d="gridDots" fill="#000" fill-opacity=".62" />
            <g fill="#00008c" fill-opacity=".2">
              <polygon points="311,266 889,101 889,181 311,345" />
              <polygon points="889,101 1150,247 1150,327 889,181" />
              <polygon points="496,213 594,268 594,345 496,292" />
              <polygon points="627,176 757,249 757,328 627,254" />
            </g>
            <g fill="#00008c" fill-opacity=".12">
              <polygon points="926,201 1019,174 1019,253 1000,259 905,207" />
              <polygon points="1056,274 1150,247 1150,327 1131,332 1036,280" />
            </g>
            <g class="edges">
              <path d="M657 265L889 200L1150 346V523L763 633M1150 346L763 456M763 351L887 421V598L763 528M763 412L889 377L1150 523M889 200V377M1019 273L763 346M776 417V535M776 417L813 438V556" />
            </g>
            <path d="M774 418V535M815 439V558M777 414L812 434M776 537L813 559" class="hinge" />
            <g class="loads">
              <path v-for="(q, i) in planes" :key="'e' + i" :d="`M${q.x1} ${q.y1}L${q.x2} ${q.y2}M${q.x1} ${q.y1 + H}L${q.x2} ${q.y2 + H}`" stroke-dasharray="4 1" />
              <path v-for="(a, i) in arrowList" :key="'a' + i" :d="`M${a.x} ${a.y}V${a.y + H}`" class="shaft" />
              <path v-for="(a, i) in arrowList" :key="'h' + i" :d="`M${a.x - 3} ${a.y + 72}h6l-3 7z`" class="head" />
              <path d="M573 712V720" class="heavy" />
              <circle v-for="c in pins" :key="'p' + c[0] + c[1]" :cx="c[0]" :cy="c[1]" r="2" class="head" />
            </g>
            <rect v-for="c in corners" :key="'c' + c[0] + c[1]" :x="c[0] - 1" :y="c[1] - 1" width="3" height="3" fill="#e00" />
            <g v-for="t in tags" :key="'t' + t[0] + t[1]">
              <rect :x="t[0] - 19" :y="t[1] - 9" width="37" height="17" fill="#fff" />
              <text :x="t[0]" :y="t[1] + 3" class="tag">30.000</text>
            </g>
          </svg>
          <p class="caption">ZS1 : Vlastní tíha<br>Zatížení [kN/m]</p>

          <div class="dialog" role="dialog" aria-label="Upravit">
            <div class="dtitle"><span>Upravit</span><button aria-label="Zavřít dialog"><svg viewBox="0 0 12 10"><path d="M2 1L10 9M10 1L2 9" /></svg></button></div>
            <div class="dbody">
              <div class="dtabs" role="tablist">
                <button v-for="t in dialogTabs" :key="t" role="tab" :class="{ on: t === 'Možnosti' }">{{ t }}</button>
              </div>
              <div class="dpanel">
                <div class="dleft">
                  <div class="group look">
                    <label class="gtitle" for="look">Vzhled</label>
                    <select id="look" v-model="chosen"><option v-for="s in styles" :key="s">{{ s }}</option></select>
                    <svg class="caret" viewBox="0 0 8 4"><path d="M0 0H8L4 4Z" /></svg>
                    <ul class="options" role="listbox" aria-label="Vzhled">
                      <li v-for="s in styles" :key="s" role="option" :class="{ sel: s === chosen }" :aria-selected="s === chosen" @click="chosen = s">{{ s }}</li>
                    </ul>
                    <svg class="cursor" viewBox="0 0 12 20"><path d="M1 1V16L4.500 13L7 18.500L9.500 17.500L7 12H11.500Z" /></svg>
                  </div>
                  <div class="group second"><div class="gtitle" /><select disabled aria-label="Velikost"><option /></select></div>
                  <div class="group third" />
                </div>
                <div class="group big" />
              </div>
              <div class="dfoot">
                <button class="sq" aria-label="Nápověda"><svg class="ico" viewBox="0 0 16 16" v-html="icons.help" /></button>
                <button class="sq gap" aria-label="Načíst"><svg class="ico" viewBox="0 0 16 16" v-html="icons.flash" /></button>
                <button class="sq" aria-label="Uložit"><svg class="ico" viewBox="0 0 16 16" v-html="icons.flash" /></button>
                <button class="close">Zavřít</button>
              </div>
            </div>
          </div>
        </section>

        <section class="tablepane">
          <div class="phead">
            <span>1.1 Uzly</span>
            <button aria-label="Připnout tabulku"><svg viewBox="0 0 10 10"><path d="M3 1H7V6H3ZM1 6H9M5 6V10" /></svg></button>
            <button aria-label="Zavřít tabulku"><svg viewBox="0 0 10 10"><path d="M1 1L9 9M9 1L1 9" /></svg></button>
          </div>
          <div class="tbar" role="toolbar">
            <template v-for="(it, k) in tableTools" :key="k">
              <span v-if="it === '|'" class="tb-sep"><i /></span>
              <button v-else class="tb-btn" :class="{ on: it[0] === '*' }" :aria-label="it.replace('*', '')"><svg class="ico" viewBox="0 0 16 16" v-html="icons[it.replace('*', '')]" /></button>
            </template>
          </div>
          <div class="gridwrap">
            <table>
              <colgroup><col class="w-n"><col class="w-a"><col class="w-b"><col class="w-c"><col class="w-d"><col class="w-d"><col class="w-d"><col></colgroup>
              <thead>
                <tr class="lets"><th rowspan="3" class="num">Uzel<br>č.</th><th v-for="l in letters" :key="l" class="let" :class="{ cur: l === 'C' }">{{ l }}</th></tr>
                <tr><th /><th>Reference</th><th>Souřadný</th><th colspan="3">Souřadnice uzlu</th><th /></tr>
                <tr><th>Typ uzlu</th><th>Uzel</th><th>systém</th><th>X [m]</th><th>Y [m]</th><th>Z [m]</th><th>Komentář</th></tr>
              </thead>
              <tbody>
                <tr v-for="(r, i) in rows" :key="i" :class="{ hot: i === 0 }">
                  <th class="num" scope="row">{{ i + 1 }}</th>
                  <td>Standard</td><td class="ce">0</td><td class="ks"><u>K</u>artézský</td>
                  <td v-for="(v, k) in r" :key="k" class="ri">{{ v }}</td><td />
                </tr>
              </tbody>
            </table>
            <div class="vscroll small"><i class="up" /><b class="thumb" /><i class="down" /></div>
          </div>
          <div class="sheets">
            <div class="sheetlist"><button v-for="(s, i) in sheets" :key="s" :class="{ on: i === 0 }">{{ s }}</button></div>
            <button class="nv off" aria-label="První"><svg viewBox="0 0 8 8"><path d="M1 0V8M7 0V8L3 4Z" /></svg></button>
            <button class="nv off" aria-label="Předchozí"><svg viewBox="0 0 8 8"><path d="M6 0V8L2 4Z" /></svg></button>
            <button class="nv" aria-label="Další"><svg viewBox="0 0 8 8"><path d="M2 0V8L6 4Z" /></svg></button>
            <button class="nv" aria-label="Poslední"><svg viewBox="0 0 8 8"><path d="M7 0V8M1 0V8L5 4Z" /></svg></button>
          </div>
          <div class="band" />
        </section>
      </div>
    </main>

    <footer class="status">
      <div class="modes"><button v-for="m in modes" :key="m">{{ m }}</button></div>
      <i class="s1" /><i class="s2" /><i class="s3" /><i class="s4" />
      <svg class="corner" viewBox="0 0 10 10"><path d="M8 1h2v2h-2zM4 5h2v2h-2zM8 5h2v2h-2zM0 8h2v2h-2zM4 8h2v2h-2zM8 8h2v2h-2z" /></svg>
    </footer>
  </div>
</template>

<style>
html, body { margin: 0; background: #fff; }
</style>

<style scoped>
* { box-sizing: border-box; }
button { font: inherit; color: inherit; background: none; border: 0; padding: 0; margin: 0; }
ul { list-style: none; margin: 0; padding: 0; }
.app {
  display: flex; flex-direction: column; height: 100vh; min-height: 720px; overflow: hidden;
  border-radius: 7px 7px 6px 6px; background: linear-gradient(90deg, #333 0, #606060 3px, #4a4a4a 6px, #505050 8px, #505050 calc(100% - 7px), #333 calc(100% - 5px), #5a5a5a calc(100% - 2px), #333 100%);
  font: 11px/14px Roboto, "Noto Sans", sans-serif; color: #111;
}
.ico { width: 16px; height: 16px; flex: none; display: block; overflow: visible; }
.titlebar { flex: none; height: 26px; display: flex; align-items: center; padding: 0 10px 0 8px; background: linear-gradient(#6b6f78 0, #3d4352 2px, #434a5a 8px, #2b2b2b 10px, #303030 18px, #4a4a4a 25px); }
.titlebar h1 { flex: 1; margin: 0; text-align: center; font-size: 11px; font-weight: 400; color: #e8e8e8; }
.titlebar h1 span { color: #a9c6ee; }
.wctl { display: flex; gap: 9px; padding-top: 7px; }
.wctl svg { width: 12px; height: 12px; display: block; }
.wctl path { fill: none; stroke: #b9b9b9; stroke-width: 2; }
.mdi { margin-left: auto; gap: 3px; padding: 5px 9px 0 0; }
.mdi path { stroke-width: 1; }
.menubar { flex: none; height: 22px; margin: 0 0 1px; display: flex; align-items: center; padding-left: 12px; color: #ececec; background: #535353; }
.menubar .ico { margin: 0 9px 0 2px; }
.menubar > button { margin-right: 12px; white-space: nowrap; }
.grip { display: block; width: 2px; height: 14px; background: repeating-linear-gradient(#ddd 0 2px, transparent 2px 4px); }
.grip.dark { background: repeating-linear-gradient(#222 0 2px, #eee 2px 3px, transparent 3px 4px); }
.toolrow { flex: none; display: flex; height: 22px; margin: 0 7px 2px 8px; }
.bar { display: flex; align-items: stretch; min-width: 0; border-radius: 3px; background: linear-gradient(#d3d6dc, #bcc0c9 45%, #9ea4af); box-shadow: inset 0 1px #e3e5e9, inset 0 -1px #8b919c; }
.bar-a { flex: 0 0 68.400%; }
.bar-b { flex: 0 0 26%; }
.bar-c { flex: 585 1 0; }
.bar-d { flex: 285 1 0; }
.bar-e { flex: 294 1 0; }
.t-btn { flex: 204 1 0; min-width: 0; display: flex; align-items: center; justify-content: center; }
.t-grip { flex: 80 1 0; display: flex; align-items: center; justify-content: center; }
.t-sep { flex: 70 1 0; display: flex; align-items: center; justify-content: center; }
.t-sep i, .tb-sep i { width: 2px; height: 13px; background: linear-gradient(90deg, #6f7580 50%, #f2f3f5 50%); }
.t-drop { flex: 120 1 0; display: flex; align-items: center; justify-content: center; }
.t-drop::after { content: ""; border: 3px solid transparent; border-top-color: #444; border-bottom: 0; }
.t-combo { flex: 2030 1 0; display: flex; align-items: center; position: relative; }
.t-combo select { appearance: none; width: 100%; height: 17px; border: 0; border-radius: 0; padding: 0 2px; background: #fff; font: inherit; color: #111; }
.t-combo::after { content: ""; position: absolute; right: 0; width: 14px; height: 17px; border: 1px solid #fff; background: linear-gradient(#555, #555) 4px 6px / 5px 1px no-repeat, linear-gradient(#555, #555) 5px 7px / 3px 1px no-repeat, #a9aeb8; }

.work { flex: 1; min-height: 0; display: flex; gap: 4px; margin: 0 7px 2px 8px; }
.navigator { flex: none; width: 228px; display: flex; flex-direction: column; }
.phead { flex: none; display: flex; align-items: center; height: 18px; padding: 0 6px 1px 3px; background: linear-gradient(#b0b2b0, #9a9c9a 3px, #a2a4a2); color: #4b4b4b; }
.phead span { flex: 1; }
.phead button { margin-left: 7px; }
.phead svg { width: 9px; height: 9px; display: block; }
.phead path { fill: none; stroke: #4b4b4b; stroke-width: 1; }
.treebox { flex: 1; min-height: 0; display: grid; grid-template-columns: minmax(0, 1fr) 14px; grid-template-rows: minmax(0, 1fr) 15px; background: #efefef; border: 2px solid #c2c2c2; border-bottom-color: #ddd; }
.treeview { overflow: hidden; background: #fbfaf3; border: 1px solid #8a8a8a; border-width: 1px 0 0 1px; }
.treeview ul { display: flex; flex-direction: column; height: calc(100% + 4px); padding-left: 2px; }
.treeview li { flex: 1 1 0; min-height: 0; display: flex; align-items: stretch; white-space: nowrap; }
.treeview .ico { width: 15px; height: 15px; margin: 0 1px; align-self: center; }
.txt { padding-left: 2px; align-self: center; }
.txt.root { font-weight: 700; }
.cell { flex: none; width: 18px; position: relative; }
.rail, .joint { background: repeating-linear-gradient(#999 0 1px, transparent 1px 2px) 8px 0 / 1px 100% no-repeat; }
.joint.last { background-size: 1px 50%; }
.joint::after { content: ""; position: absolute; left: 9px; right: 0; top: 50%; height: 1px; background: repeating-linear-gradient(90deg, #999 0 1px, transparent 1px 2px); }
.box { position: absolute; z-index: 1; left: 4px; top: calc(50% - 4px); width: 9px; height: 9px; border: 1px solid #8f949c; border-radius: 1px; background: linear-gradient(#2a4a98, #2a4a98) 1px 3px / 5px 1px no-repeat, #f6f6f6; }
.box.plus { background: linear-gradient(#2a4a98, #2a4a98) 1px 3px / 5px 1px no-repeat, linear-gradient(#2a4a98, #2a4a98) 3px 1px / 1px 5px no-repeat, #f6f6f6; }
.vscroll { display: flex; flex-direction: column; align-items: center; background: #ededed; }
.vscroll i, .hscroll i { width: 0; height: 0; border: 3px solid transparent; }
.up { margin-top: 6px; border-bottom-color: #333 !important; border-top-width: 0 !important; }
.down { margin: auto 0 6px; border-top-color: #333 !important; border-bottom-width: 0 !important; }
.vscroll .thumb { width: 13px; height: 53%; margin-top: 17px; border: 1px solid #9b9b9b; border-radius: 2px; background: repeating-linear-gradient(#555 0 1px, transparent 1px 3px) center / 6px 7px no-repeat, linear-gradient(90deg, #f5f5f5, #d9d9dc 60%, #c4c4c8); }
.hscroll { display: flex; align-items: center; background: #ededed; }
.lt { margin-left: 5px; border-right-color: #333 !important; border-left-width: 0 !important; }
.rt { margin-left: auto; margin-right: 5px; border-left-color: #333 !important; border-right-width: 0 !important; }
.hscroll .thumb { width: 39%; height: 13px; margin-left: 9px; border: 1px solid #9b9b9b; border-radius: 2px; background: repeating-linear-gradient(90deg, #555 0 1px, transparent 1px 3px) center / 7px 6px no-repeat, linear-gradient(#f5f5f5, #d4d4d8); }
.navtabs { flex: none; height: 22px; padding: 0 0 3px 3px; display: flex; gap: 6px; color: #e8e8e8; }
.navtabs button { display: flex; align-items: center; gap: 2px; padding: 0 2px; border-radius: 0 0 3px 3px; }
.navtabs .on { background: linear-gradient(#fff, #dfe8f0); color: #111; }

.right { flex: 1; min-width: 0; display: flex; flex-direction: column; gap: 5px; }
.view { flex: 1; min-height: 0; position: relative; overflow: hidden; background: #fff; border: 2px solid #777; border-width: 1px 2px 0; }
.scene { position: absolute; inset: 0; width: 100%; height: 100%; }
.springs path { fill: #dfe9df; fill-opacity: .85; }
.springs .coil { fill: none; stroke: #98a898; stroke-opacity: .5; }
.edges path { fill: none; stroke: #222; stroke-width: 1; }
.hinge { fill: none; stroke: #f045e8; stroke-width: 2; stroke-dasharray: 7 3 2 3; stroke-opacity: .75; }
.loads path { fill: none; stroke: #14148c; stroke-width: 1; }
.loads .shaft { stroke-opacity: .75; }
.loads .heavy { stroke-width: 2; }
.loads .head { fill: #00008c; stroke: none; }
.tag { font: 10px "Liberation Sans", Arial, sans-serif; fill: #10108c; text-anchor: middle; }
.caption { position: absolute; left: 4px; top: 4px; margin: 0; font: 10px/13px "Liberation Sans", Arial, sans-serif; color: #000; }

.dialog { position: absolute; left: 11px; top: 170px; width: 510px; height: 449px; display: flex; flex-direction: column; border: 1px solid #2b3f4c; border-radius: 5px 5px 2px 2px; background: #f0f0f0; box-shadow: inset -1px -1px #3fc4e0, inset 1px 1px #d8ecf8; font: 10px/12px "DejaVu Sans Condensed", "Noto Sans", sans-serif; }
.dtitle { flex: none; height: 20px; display: flex; align-items: center; margin: 1px 1px 0; padding: 0 4px; border-radius: 4px 4px 0 0; background: linear-gradient(#9db8d4, #b9d0e8); }
.dtitle span { flex: 1; font: 11px/14px Roboto, "Noto Sans", sans-serif; }
.dtitle button { width: 26px; height: 14px; border: 1px solid #6b1c1c; border-radius: 2px; background: linear-gradient(#e6a196, #cf4a38 50%, #b8301e 51%, #d46a50); display: grid; place-items: center; }
.dtitle svg { width: 10px; height: 8px; }
.dtitle path { stroke: #fff; stroke-width: 2; fill: none; }
.dbody { flex: 1; display: flex; flex-direction: column; padding: 5px 9px 10px 8px; }
.dtabs { display: flex; align-items: flex-end; height: 18px; }
.dtabs button { height: 16px; padding: 0 4px; border: 1px solid #8c8e94; border-bottom: 0; background: linear-gradient(#f4f4f4, #dcdcdc); white-space: nowrap; }
.dtabs .on { height: 19px; padding: 0 5px 3px; background: #fff; margin-bottom: -1px; z-index: 1; }
.dpanel { flex: 1; display: flex; gap: 7px; padding: 8px 5px 6px 6px; background: #fff; border: 1px solid #989898; }
.dleft { flex: 1; display: flex; flex-direction: column; gap: 9px; }
.group { position: relative; background: #f0f3f9; border: 1px solid #e0e8f4; border-right-color: #b3b3ee; border-bottom-color: #b3b3ee; }
.big { flex: 1; }
.look { height: 42px; }
.second { height: 112px; }
.third { flex: 1; }
.gtitle { display: block; height: 14px; margin: -1px -1px 0; padding-left: 2px; line-height: 14px; background: #dde7f4; color: #24456e; clip-path: polygon(0 0, calc(100% - 9px) 0, 100% 9px, 100% 100%, 0 100%); }
.look select { appearance: none; position: absolute; left: 1px; top: 18px; width: 229px; height: 20px; padding: 0 2px; border: 1px solid #2c628b; border-radius: 2px; background: linear-gradient(#e8f4fb, #bfe1f3 50%, #92cbe8 51%, #6fb3d8); font: inherit; color: #000; }
.caret { position: absolute; left: 217px; top: 27px; width: 8px; height: 4px; }
.options { position: absolute; z-index: 2; left: 2px; top: 37px; width: 229px; border: 1px solid #777; border-top-color: #bbb; background: #fff; box-shadow: 3px 3px 3px rgba(0, 0, 0, .45); }
.options li { height: 12px; padding-left: 1px; white-space: nowrap; }
.options .sel { background: #3399ff; color: #fff; }
.cursor { position: absolute; z-index: 3; left: 181px; top: 126px; width: 12px; height: 20px; }
.cursor path { fill: #fff; stroke: #1c2430; }
.second select { appearance: none; position: absolute; left: 19px; bottom: 5px; width: 56px; height: 16px; border: 1px solid #b5b5b5; background: linear-gradient(#9a9a9a, #9a9a9a) 45px 6px / 3px 2px no-repeat, linear-gradient(#ececec, #ececec) right / 15px 100% no-repeat, #fff; }
.dfoot { display: flex; align-items: center; height: 20px; margin: 11px 0 0 1px; }
.sq { width: 24px; height: 20px; margin-right: 3px; display: grid; place-items: center; border: 1px solid #8a8a8a; border-radius: 3px; background: linear-gradient(#f6f6f6, #d9d9d9); }
.sq.gap { margin-left: 6px; }
.close { width: 68px; height: 20px; margin-left: auto; border: 1px solid #2f86a6; border-radius: 3px; background: linear-gradient(#f4f6f7, #e4e8ea 50%, #d2d7da); box-shadow: inset 0 0 0 1px #48c6ec; }

.tablepane { flex: none; display: flex; flex-direction: column; background: #f0f0f0; }
.tablepane .phead { height: 16px; }
.tbar { flex: none; height: 26px; display: flex; align-items: center; padding-left: 8px; background: linear-gradient(#d5d8dd, #b3b8c1 50%, #8c929e); }
.tb-btn { width: 20px; height: 20px; display: grid; place-items: center; }
.tb-btn.on { background: linear-gradient(#fbd9a0, #f7ae4c); box-shadow: inset 0 0 0 1px #d9a55c; }
.tb-sep { width: 8px; display: flex; justify-content: center; }
.gridwrap { display: flex; padding: 1px 3px 0 2px; }
table { flex: 1; min-width: 0; width: 100%; table-layout: fixed; border-collapse: separate; border-spacing: 0; font: 10px/14px "Liberation Sans", Arial, sans-serif; color: #000; border-top: 1px solid #777; border-left: 1px solid #777; }
.w-n { width: 42px; } .w-a { width: 77px; } .w-b { width: 67px; } .w-c { width: 82px; } .w-d { width: 72px; }
th { font-weight: 400; padding: 0; height: 15px; background: #f0f0f0; border-right: 1px solid #9a9a9a; }
thead tr:last-child th { border-bottom: 1px solid #888; }
.lets th { height: 14px; line-height: 13px; }
th.let { background: #e0e0e0; border-right: 1px solid #666; border-bottom: 1px solid #666; box-shadow: inset 1px 1px #fff; }
th.cur { background: #3399ff; color: #fff; box-shadow: none; }
th.num { background: #e0e0e0; border-right: 1px solid #666; border-bottom: 1px solid #666; line-height: 13px; }
tbody td { height: 15px; padding: 0 3px; background: #fff; border-right: 1px solid #9a9a9a; border-bottom: 1px solid #9a9a9a; white-space: nowrap; }
tbody th.num { line-height: 14px; }
.hot td { background: #ffffc0; }
.hot th.num { background: #3399ff; color: #fff; }
.hot .ks { outline: 1px dotted #222; outline-offset: -2px; }
.ce { text-align: center; }
.ri { text-align: right; }
.small { width: 15px; margin-left: 1px; padding: 0; }
.small .thumb { height: 14px; margin-top: 5px; background: linear-gradient(90deg, #f5f5f5, #c4c4c8); }
.sheets { display: flex; height: 16px; margin: 4px 2px 0 0; }
.sheetlist { flex: 1; min-width: 0; display: flex; margin-right: 8px; border-bottom: 1px solid #555; }
.sheetlist button { flex: 1 0 auto; height: 15px; padding: 0 2px; white-space: nowrap; line-height: 14px; background: #e4e4e4; border: 1px solid #777; border-width: 1px 1px 0 0; border-radius: 0 0 5px 0; font-family: "Liberation Sans", Arial, sans-serif; font-size: 10px; }
.sheetlist .on { background: #fff; border-top-color: transparent; }
.nv { flex: none; width: 15px; height: 15px; display: grid; place-items: center; border: 1px solid #999; border-width: 0 1px 1px 0; background: #f4f4f4; }
.nv svg { width: 8px; height: 8px; }
.nv path { fill: #000; stroke: #000; stroke-width: 1; }
.off path { fill: #aaa; stroke: #aaa; }
.band { height: 16px; background: #f1edec; border-top: 1px solid #fff; }

.status { flex: none; height: 25px; display: flex; align-items: flex-start; padding: 1px 9px 0 0; background: linear-gradient(#3c4252 0, #3e4556 6px, #282828 8px, #333 24px, #222); color: #e6e6e6; position: relative; }
.modes { width: 757px; display: flex; justify-content: flex-end; gap: 3px; }
.modes button { height: 17px; padding: 0 1px; border: 1px solid #000; border-right-color: #ddd; border-bottom-color: #ddd; line-height: 14px; }
.status > i { width: 1px; height: 16px; background: #9a9a9a; margin-top: 1px; }
.s1 { margin-left: 143px; } .s2 { margin-left: 51px; } .s3 { margin-left: 67px; } .s4 { margin-left: 67px; }
.corner { width: 10px; height: 10px; margin: 8px 0 0 auto; fill: #aaa; }
</style>
